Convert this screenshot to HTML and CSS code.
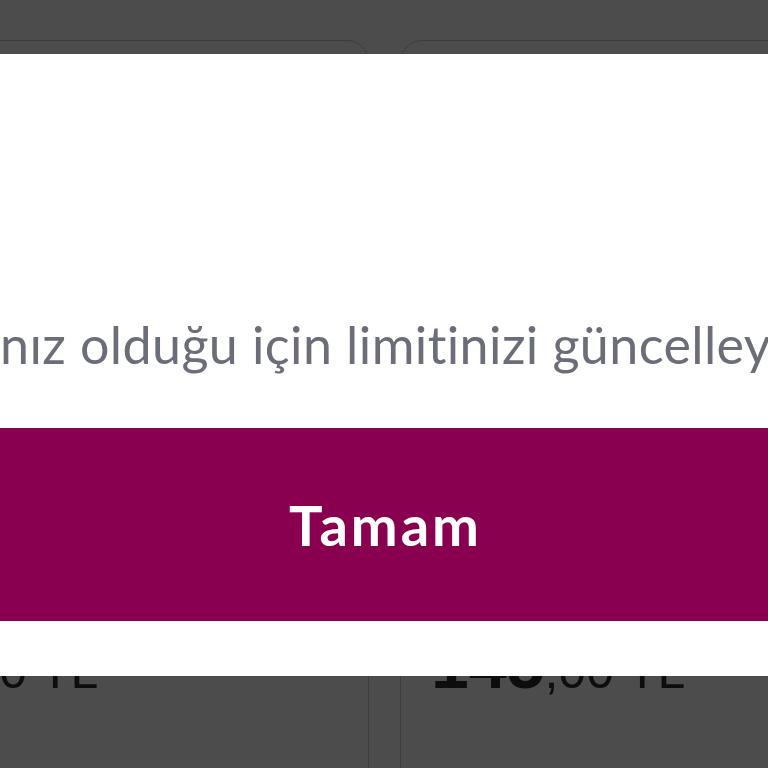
FILE: index.html
```html
<!DOCTYPE html>
<html lang="tr">
<head>
<meta charset="utf-8">
<title>Limit</title>
<link rel="stylesheet" href="styles.css">
</head>
<body>
<div class="page">
  <div class="cards">
    <div class="card">
      <div class="price"><span class="big">145</span><span class="small">,00 TL</span></div>
    </div>
    <div class="card">
      <div class="price"><span class="big">145</span><span class="small">,00 TL</span></div>
    </div>
  </div>
</div>
<div class="modal">
  <div class="body">
    <p class="message">nız olduğu için limitinizi güncelleyin</p>
  </div>
  <button class="ok">Tamam</button>
  <div class="foot"></div>
</div>
</body>
</html>
```
FILE: styles.css
```css
html, body {
  margin: 0;
  padding: 0;
  width: 768px;
  height: 768px;
  overflow: hidden;
  background: #4c4c4c;
}
.page {
  padding-top: 40px;
}
.cards {
  display: grid;
  grid-template-columns: 556px 556px;
  gap: 31px;
  margin-left: -187px;
  width: 1143px;
}
.card {
  height: 900px;
  border: 1px solid #3d3d3d;
  border-radius: 22px;
  padding: 589px 0 0 30px;
  box-sizing: border-box;
}
.price {
  font-family: "Liberation Sans", Arial, sans-serif;
  font-size: 68px;
  line-height: 1;
  color: #0d0d0d;
  white-space: nowrap;
}
.price .big {
  font-weight: 700;
}
.price .small {
  font-size: 50px;
  font-weight: 400;
}
.modal {
  position: absolute;
  top: 54px;
  left: 0;
  width: 768px;
  height: 622px;
  background: #ffffff;
  display: flex;
  flex-direction: column;
  overflow: hidden;
}
.body {
  height: 374px;
  display: flex;
  align-items: flex-end;
  padding-bottom: 59px;
  box-sizing: border-box;
}
.message {
  margin: 0;
  font-family: Lato, "Open Sans", sans-serif;
  font-size: 52px;
  line-height: 50px;
  letter-spacing: 0.4px;
  color: #6b6e78;
  white-space: nowrap;
}
.ok {
  height: 193px;
  border: 0;
  margin: 0;
  background: #8a0050;
  color: #ffffff;
  font-family: Lato, "Open Sans", sans-serif;
  font-weight: 700;
  font-size: 56px;
  letter-spacing: 3px;
  width: 100%;
  padding: 0 0 0 3px;
}
.foot {
  flex: 1;
}
```
